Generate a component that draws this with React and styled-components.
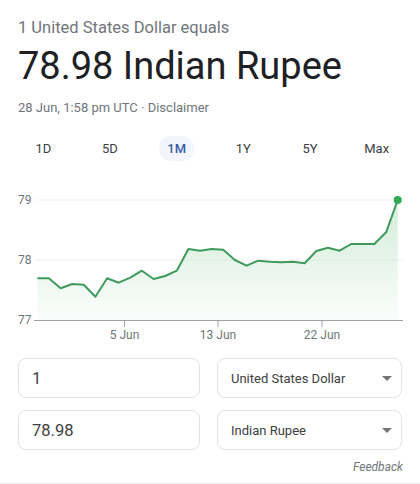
import React from "react";
import styled, { createGlobalStyle } from "styled-components";

const Global = createGlobalStyle`
  html, body { margin: 0; padding: 0; background: #fff; }
  body { font-family: Roboto, "Noto Sans", Arial, sans-serif; }
`;

const Page = styled.div`
  width: 420px;
  padding: 18px 0 8px;
  box-sizing: border-box;
  border-bottom: 1px solid #ececec;
`;

const Header = styled.div`
  padding: 0 18px;
  display: flex;
  flex-direction: column;
`;

const Equals = styled.div`
  font-size: 16.5px;
  line-height: 20px;
  color: #70757a;
`;

const Big = styled.div`
  font-size: 38px;
  line-height: 44px;
  color: #202124;
  margin-top: 6px;
`;

const Stamp = styled.div`
  font-size: 13px;
  line-height: 16px;
  color: #70757a;
  margin-top: 12px;
`;

const Tabs = styled.div`
  display: grid;
  grid-template-columns: repeat(6, 1fr);
  padding: 0 10px;
  margin-top: 20px;
`;

const Tab = styled.div`
  justify-self: center;
  height: 25px;
  line-height: 25px;
  padding: 0 8px;
  border-radius: 12px;
  font-size: 13px;
  font-weight: ${(p) => (p.$active ? 500 : 400)};
  color: ${(p) => (p.$active ? "#3a5ba8" : "#3c4043")};
  background: ${(p) => (p.$active ? "#f2f6fc" : "transparent")};
`;

const Chart = styled.svg`
  display: block;
  width: 420px;
  height: 160px;
  margin-top: 24px;
`;

const Converter = styled.div`
  display: grid;
  grid-template-columns: 182px 1fr;
  column-gap: 17px;
  row-gap: 12px;
  padding: 0 18px;
  margin-top: 13px;
`;

const Field = styled.div`
  height: 40px;
  box-sizing: border-box;
  border: 1px solid #e3e3e3;
  border-radius: 8px;
  display: flex;
  align-items: center;
  padding: 0 13px;
  font-size: 16.5px;
  color: #3c4043;
`;

const Select = styled(Field)`
  justify-content: space-between;
  font-size: 13px;
  padding: 0 9px 0 13px;
`;

const Caret = styled.span`
  width: 0;
  height: 0;
  border-left: 5px solid transparent;
  border-right: 5px solid transparent;
  border-top: 5px solid #757575;
`;

const FeedbackRow = styled.div`
  display: flex;
  justify-content: flex-end;
  padding: 0 17px;
  margin-top: 9px;
`;

const Feedback = styled.span`
  font-size: 12px;
  line-height: 16px;
  font-style: italic;
  color: #70757a;
`;

const pts = [
  278.3, 278.3, 288.3, 284, 284.7, 296.7, 278.3, 282.7, 277.7, 270.7, 279,
  276, 270.7, 249, 250.7, 249, 249.7, 260, 265.7, 260.7, 261.7, 262.3, 261.7,
  263.3, 251, 247.7, 250.7, 244, 244, 244, 232.3, 200,
];
const x0 = 37.3;
const x1 = 397.7;
const step = (x1 - x0) / (pts.length - 1);
const coords = pts.map((y, i) => [x0 + i * step, y]);
const linePath = coords.map(([x, y], i) => `${i ? "L" : "M"}${x.toFixed(1)},${y}`).join(" ");
const areaPath = `${linePath} L${x1},320 L${x0},320 Z`;

const tabs = ["1D", "5D", "1M", "1Y", "5Y", "Max"];

export default function App() {
  return (
    <>
      <Global />
      <Page>
        <Header>
          <Equals>1 United States Dollar equals</Equals>
          <Big>78.98 Indian Rupee</Big>
          <Stamp>28 Jun, 1:58 pm UTC · Disclaimer</Stamp>
        </Header>
        <Tabs>
          {tabs.map((t) => (
            <Tab key={t} $active={t === "1M"}>
              {t}
            </Tab>
          ))}
        </Tabs>
        <Chart viewBox="0 185 420 160">
          <defs>
            <linearGradient id="fill" x1="0" y1="0" x2="0" y2="1">
              <stop offset="0" stopColor="#34a853" stopOpacity="0.22" />
              <stop offset="1" stopColor="#34a853" stopOpacity="0.02" />
            </linearGradient>
          </defs>
          <line x1="36" x2="403" y1="200" y2="200" stroke="#f1f1f1" strokeWidth="1" />
          <line x1="36" x2="403" y1="260" y2="260" stroke="#f1f1f1" strokeWidth="1" />
          <path d={areaPath} fill="url(#fill)" />
          <path d={linePath} fill="none" stroke="#3f9a5c" strokeWidth="2" strokeLinejoin="round" />
          <circle cx={x1} cy="200" r="4" fill="#34a853" />
          <line x1="34" x2="403" y1="320.5" y2="320.5" stroke="#9aa0a6" strokeWidth="1" />
          {[124.5, 218, 322].map((x) => (
            <line key={x} x1={x} x2={x} y1="320" y2="327" stroke="#9aa0a6" strokeWidth="1" />
          ))}
          <g fontFamily="Roboto, Arial, sans-serif" fontSize="12" fill="#70757a">
            <text x="18" y="204">79</text>
            <text x="18" y="264">78</text>
            <text x="18" y="324">77</text>
            <text x="124.5" y="339" textAnchor="middle">5 Jun</text>
            <text x="218" y="339" textAnchor="middle">13 Jun</text>
            <text x="322" y="339" textAnchor="middle">22 Jun</text>
          </g>
        </Chart>
        <Converter>
          <Field>1</Field>
          <Select>
            United States Dollar
            <Caret />
          </Select>
          <Field>78.98</Field>
          <Select>
            Indian Rupee
            <Caret />
          </Select>
        </Converter>
        <FeedbackRow>
          <Feedback>Feedback</Feedback>
        </FeedbackRow>
      </Page>
    </>
  );
}
